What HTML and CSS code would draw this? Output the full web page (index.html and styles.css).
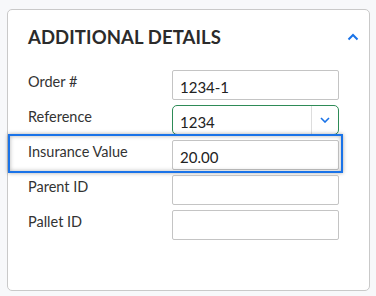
FILE: index.html
```html
<!DOCTYPE html>
<html>
<head>
<meta charset="utf-8">
<link rel="stylesheet" href="styles.css">
</head>
<body>
<section class="card">
  <header class="card-head">
    <h2 class="title">ADDITIONAL DETAILS</h2>
    <svg class="chev-up" width="12" height="8" viewBox="0 0 12 8"><path d="M1.5 6.5 L6 2 L10.5 6.5" fill="none" stroke="#1a73e8" stroke-width="2"/></svg>
  </header>
  <div class="rows">
    <div class="row">
      <label class="label">Order #</label>
      <div class="input">1234-1</div>
    </div>
    <div class="row">
      <label class="label">Reference</label>
      <div class="input select">
        <span class="val">1234</span>
        <span class="sel-btn"><svg width="10" height="6" viewBox="0 0 10 6"><path d="M1 1 L5 5 L9 1" fill="none" stroke="#1a73e8" stroke-width="1.6"/></svg></span>
      </div>
    </div>
    <div class="row highlight">
      <label class="label">Insurance Value</label>
      <div class="input">20.00</div>
    </div>
    <div class="row">
      <label class="label">Parent ID</label>
      <div class="input"></div>
    </div>
    <div class="row">
      <label class="label">Pallet ID</label>
      <div class="input"></div>
    </div>
  </div>
</section>
</body>
</html>
```
FILE: styles.css
```css
html, body { margin: 0; padding: 0; }
body {
  background: #f7f8fa;
  font-family: Lato, "Liberation Sans", sans-serif;
  color: #333;
  width: 376px;
  height: 296px;
  padding: 9px 6px 0 7px;
  box-sizing: border-box;
}
.card {
  background: #fff;
  border: 1px solid #c9c9c9;
  border-radius: 5px;
  height: 282px;
  box-sizing: border-box;
}
.card-head {
  display: flex;
  align-items: center;
  justify-content: space-between;
  padding: 15px 10px 0 20px;
  height: 38px;
  box-sizing: border-box;
}
.title {
  margin: 0;
  font-size: 18.5px;
  font-weight: 700;
  letter-spacing: 0.1px;
  color: #2b2b2b;
  line-height: 22px;
}
.chev-up { margin-top: 0; }
.rows {
  display: flex;
  flex-direction: column;
  gap: 5px;
  padding-top: 22px;
}
.row {
  display: flex;
  padding-left: 20px;
  position: relative;
}
.label {
  width: 144px;
  font-size: 14.5px;
  line-height: 18px;
  padding-top: 3px;
  color: #333;
}
.input {
  width: 167px;
  height: 30px;
  box-sizing: border-box;
  border: 1px solid #c4c4c4;
  border-radius: 2px;
  font-size: 15px;
  line-height: 28px;
  padding: 2px 7px 0;
  color: #222;
}
.select {
  display: flex;
  justify-content: space-between;
  border-color: #2e8b57;
  border-radius: 5px;
  padding-right: 0;
}
.sel-btn {
  width: 26px;
  border-left: 1px solid #ddd;
  display: flex;
  align-items: center;
  justify-content: center;
  height: 28px;
  margin-top: -2px;
}
.highlight::after {
  content: "";
  position: absolute;
  left: 0;
  top: -6px;
  right: 26px;
  bottom: -3px;
  border: 2px solid #1a73e8;
  box-shadow: 0 0 4px rgba(0,0,0,0.35), inset 0 0 4px rgba(0,0,0,0.3);
  pointer-events: none;
}
```
